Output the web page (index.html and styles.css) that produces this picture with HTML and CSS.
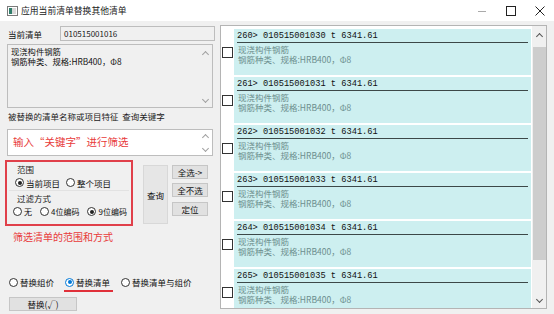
FILE: index.html
```html
<!DOCTYPE html>
<html lang="zh-CN">
<head>
    <meta charset="UTF-8">
    <title>应用当前清单替换其他清单</title>
    <link rel="stylesheet" href="styles.css">
</head>
<body>
    <div class="window">
        <div class="titlebar">
            <svg class="app-icon" width="11" height="10" viewBox="0 0 11 10">
                <rect x="0.5" y="0.5" width="10" height="9" fill="#fff" stroke="#7a7a7a"/>
                <rect x="2" y="2" width="3" height="6" fill="#2f7d6a"/>
                <rect x="5" y="2" width="4" height="6" fill="#d9d9d9"/>
            </svg>
            <span class="title">应用当前清单替换其他清单</span>
            <div class="controls">
                <span class="ctl"><svg width="10" height="10" viewBox="0 0 10 10"><line x1="1" y1="5.5" x2="9" y2="5.5" stroke="#aaa"/></svg></span>
                <span class="ctl"><svg width="10" height="10" viewBox="0 0 10 10"><rect x="0.5" y="0.5" width="9" height="9" fill="none" stroke="#222"/></svg></span>
                <span class="ctl"><svg width="10" height="10" viewBox="0 0 10 10"><path d="M0.5 0.5 L9.5 9.5 M9.5 0.5 L0.5 9.5" stroke="#222"/></svg></span>
            </div>
        </div>

        <div class="main">
            <div class="left">
                <div class="cur-row">
                    <span class="label">当前清单</span>
                    <div class="field">010515001016</div>
                </div>
                <div class="memo">
                    <div class="memo-text">现浇构件钢筋<br>钢筋种类、规格:HRB400，Φ8</div>
                    <div class="memo-scroll"><span class="chev up"></span><span class="chev down"></span></div>
                </div>

                <div class="kw-label">被替换的清单名称或项目特征&nbsp;&nbsp;查询关键字</div>
                <div class="memo kw">
                    <div class="memo-text kw-text">输入“关键字”进行筛选</div>
                    <div class="memo-scroll"><span class="chev up"></span><span class="chev down"></span></div>
                </div>

                <div class="filter">
                    <div class="red-box">
                        <div class="group">
                            <div class="group-title">范围</div>
                            <div class="radios">
                                <label class="radio"><span class="dot on"></span>当前项目</label>
                                <label class="radio"><span class="dot"></span>整个项目</label>
                            </div>
                        </div>
                        <div class="group">
                            <div class="group-title">过滤方式</div>
                            <div class="radios wide">
                                <label class="radio"><span class="dot"></span>无</label>
                                <label class="radio"><span class="dot"></span>4位编码</label>
                                <label class="radio"><span class="dot on"></span>9位编码</label>
                            </div>
                        </div>
                    </div>
                    <button class="btn query">查询</button>
                    <div class="side-btns">
                        <button class="btn small">全选-&gt;</button>
                        <button class="btn small">全不选</button>
                        <button class="btn small locate">定位</button>
                    </div>
                </div>

                <div class="hint">筛选清单的范围和方式</div>

                <div class="mode-row">
                    <label class="radio"><span class="dot"></span>替换组价</label>
                    <label class="radio marked"><span class="dot blue"></span>替换清单</label>
                    <label class="radio"><span class="dot"></span>替换清单与组价</label>
                </div>
                <button class="btn replace">替换(√)</button>
            </div>

            <div class="list">
                <div class="rows">
                    <div class="row">
                        <span class="check"></span>
                        <div class="item">
                            <div class="head">260&gt; 010515001030 t 6341.61</div>
                            <div class="desc">现浇构件钢筋<br>钢筋种类、规格:HRB400，Φ8</div>
                        </div>
                    </div>
                    <div class="row">
                        <span class="check"></span>
                        <div class="item">
                            <div class="head">261&gt; 010515001031 t 6341.61</div>
                            <div class="desc">现浇构件钢筋<br>钢筋种类、规格:HRB400，Φ8</div>
                        </div>
                    </div>
                    <div class="row">
                        <span class="check"></span>
                        <div class="item">
                            <div class="head">262&gt; 010515001032 t 6341.61</div>
                            <div class="desc">现浇构件钢筋<br>钢筋种类、规格:HRB400，Φ8</div>
                        </div>
                    </div>
                    <div class="row">
                        <span class="check"></span>
                        <div class="item">
                            <div class="head">263&gt; 010515001033 t 6341.61</div>
                            <div class="desc">现浇构件钢筋<br>钢筋种类、规格:HRB400，Φ8</div>
                        </div>
                    </div>
                    <div class="row">
                        <span class="check"></span>
                        <div class="item">
                            <div class="head">264&gt; 010515001034 t 6341.61</div>
                            <div class="desc">现浇构件钢筋<br>钢筋种类、规格:HRB400，Φ8</div>
                        </div>
                    </div>
                    <div class="row">
                        <span class="check"></span>
                        <div class="item">
                            <div class="head">265&gt; 010515001035 t 6341.61</div>
                            <div class="desc">现浇构件钢筋<br>钢筋种类、规格:HRB400，Φ8</div>
                        </div>
                    </div>
                </div>
                <div class="vscroll">
                    <span class="chev up"></span>
                    <div class="thumb"></div>
                    <span class="chev down"></span>
                </div>
            </div>
        </div>
    </div>
</body>
</html>
```

FILE: styles.css
```css
body {
    margin: 0;
    font-family: "Noto Sans CJK SC", "Liberation Sans", sans-serif;
    font-size: 8.5px;
    color: #111;
    background: #f0f0f0;
}

.window {
    width: 554px;
    height: 314px;
    overflow: hidden;
    background: #f0f0f0;
}

.titlebar {
    height: 21px;
    background: #fff;
    display: flex;
    align-items: center;
    padding-left: 7px;
}

.app-icon {
    margin-right: 3px;
}

.title {
    font-size: 8.8px;
    color: #222;
}

.controls {
    margin-left: auto;
    display: flex;
}

.ctl {
    width: 29px;
    display: flex;
    justify-content: center;
}

.main {
    display: flex;
}

.left {
    width: 213px;
    padding-left: 7px;
    display: flex;
    flex-direction: column;
}

.cur-row {
    margin-top: 5px;
    display: flex;
    align-items: center;
    height: 15px;
}

.cur-row .label {
    width: 52px;
    padding-left: 1px;
}

.field {
    width: 150px;
    height: 13px;
    line-height: 13px;
    border: 1px solid #bdbdbd;
    background: #f0f0f0;
    padding-left: 3px;
    font-size: 8px;
    color: #222;
}

.memo {
    margin-top: 3px;
    width: 204px;
    height: 62px;
    border: 1px solid #bdbdbd;
    background: #f0f0f0;
    display: flex;
}

.memo-text {
    flex: 1;
    padding: 1px 0 0 3px;
    font-family: "Noto Sans CJK SC", sans-serif;
    font-size: 8.3px;
    line-height: 10px;
    color: #111;
}

.memo-scroll {
    width: 13px;
    display: flex;
    flex-direction: column;
    justify-content: space-between;
    align-items: center;
    padding: 5px 0 3px;
}

.chev {
    width: 4px;
    height: 4px;
    border-left: 1px solid #a0a0a0;
    border-top: 1px solid #a0a0a0;
}

.chev.up {
    transform: rotate(45deg);
    margin-top: 2px;
}

.chev.down {
    transform: rotate(225deg);
    margin-bottom: 2px;
}

.kw-label {
    margin-top: 2px;
    height: 12px;
    line-height: 12px;
    padding-left: 1px;
    color: #222;
}

.memo.kw {
    margin-top: 7px;
    height: 25px;
    background: #fff;
}

.memo.kw .memo-scroll {
    padding: 3px 0 2px;
}

.kw-text {
    font-size: 10.5px;
    line-height: 19px;
    padding: 2px 0 0 5px;
    color: #e83a3a;
}

.filter {
    margin-top: 4px;
    height: 66px;
    display: flex;
    align-items: flex-start;
}

.red-box {
    margin-left: -2px;
    width: 124px;
    height: 62px;
    border: 2px solid #e0404a;
}

.group {
    margin: 0 2px;
    border-bottom: 1px solid #e2e2e2;
}

.group + .group {
    border-bottom: none;
}

.group-title {
    height: 12px;
    line-height: 12px;
    padding-left: 8px;
    margin-top: 1px;
    color: #222;
}

.radios {
    display: flex;
    gap: 6px;
    height: 15px;
    align-items: center;
    padding-left: 6px;
}

.radios.wide {
    gap: 8px;
    padding-left: 4px;
}

.radios.wide .radio {
    font-size: 8px;
}

.radio {
    display: flex;
    align-items: center;
    gap: 2px;
    color: #111;
    white-space: nowrap;
}

.dot {
    width: 7px;
    height: 7px;
    border: 1px solid #333;
    border-radius: 50%;
    background: #fff;
    position: relative;
}

.dot.on::after,
.dot.blue::after {
    content: "";
    position: absolute;
    left: 1.5px;
    top: 1.5px;
    width: 4px;
    height: 4px;
    border-radius: 50%;
    background: #222;
}

.dot.blue {
    border-color: #0078d7;
}

.dot.blue::after {
    background: #0078d7;
}

.btn {
    font-family: "Noto Sans CJK SC", sans-serif;
    font-size: 8.5px;
    color: #111;
    background: #e1e1e1;
    border: 1px solid #c6c6c6;
    padding: 0;
    margin: 0;
}

.btn.query {
    margin-left: 10px;
    margin-top: 5px;
    width: 25px;
    height: 59px;
    background: #e6e6e6;
    border-color: #d8d8d8;
}

.side-btns {
    margin-left: 4px;
    margin-top: 5px;
    display: flex;
    flex-direction: column;
    gap: 4px;
}

.btn.small {
    width: 36px;
    height: 14px;
    line-height: 12px;
}

.btn.locate {
    margin-top: 1px;
}

.hint {
    margin-top: 5px;
    height: 12px;
    line-height: 12px;
    padding-left: 6px;
    font-size: 10px;
    color: #e83a3a;
}

.mode-row {
    margin-top: 33px;
    display: flex;
    align-items: center;
    height: 12px;
    gap: 11px;
    padding-left: 2px;
}

.mode-row .radio.marked {
    position: relative;
}

.mode-row .radio.marked::after {
    content: "";
    position: absolute;
    left: -1px;
    right: -3px;
    bottom: -4px;
    height: 2px;
    background: #e0303a;
}

.btn.replace {
    margin-top: 9px;
    margin-left: 2px;
    width: 68px;
    height: 14px;
    line-height: 12px;
}

.list {
    margin-top: 4px;
    width: 325px;
    height: 282px;
    border: 1px solid #b4b4b4;
    background: #fff;
    display: flex;
}

.rows {
    width: 311px;
    padding-top: 3px;
    overflow: hidden;
}

.row {
    display: flex;
    align-items: center;
    height: 46px;
    margin-bottom: 2px;
}

.check {
    width: 9px;
    height: 9px;
    border: 1px solid #333;
    background: #fff;
    margin: 0 1px 0 1px;
}

.item {
    width: 298px;
    height: 46px;
    background: #cdeff0;
}

.head {
    margin: 0 3px;
    height: 13px;
    line-height: 14px;
    border-bottom: 1px solid #3c4848;
    font-family: "Liberation Mono", monospace;
    font-size: 8.7px;
    color: #111;
    white-space: nowrap;
}

.desc {
    padding: 1px 0 0 4px;
    font-family: "Noto Sans CJK SC", sans-serif;
    font-size: 8.5px;
    line-height: 10px;
    color: #6c8e8e;
}

.vscroll {
    width: 14px;
    margin-left: 1px;
    background: #f0f0f0;
    display: flex;
    flex-direction: column;
    align-items: center;
}

.vscroll .chev.up {
    margin-top: 8px;
    border-color: #555;
}

.vscroll .thumb {
    margin-top: 8px;
    width: 13px;
    height: 213px;
    background: #cdcdcd;
}

.vscroll .chev.down {
    margin-top: auto;
    margin-bottom: 6px;
    border-color: #555;
}
```
